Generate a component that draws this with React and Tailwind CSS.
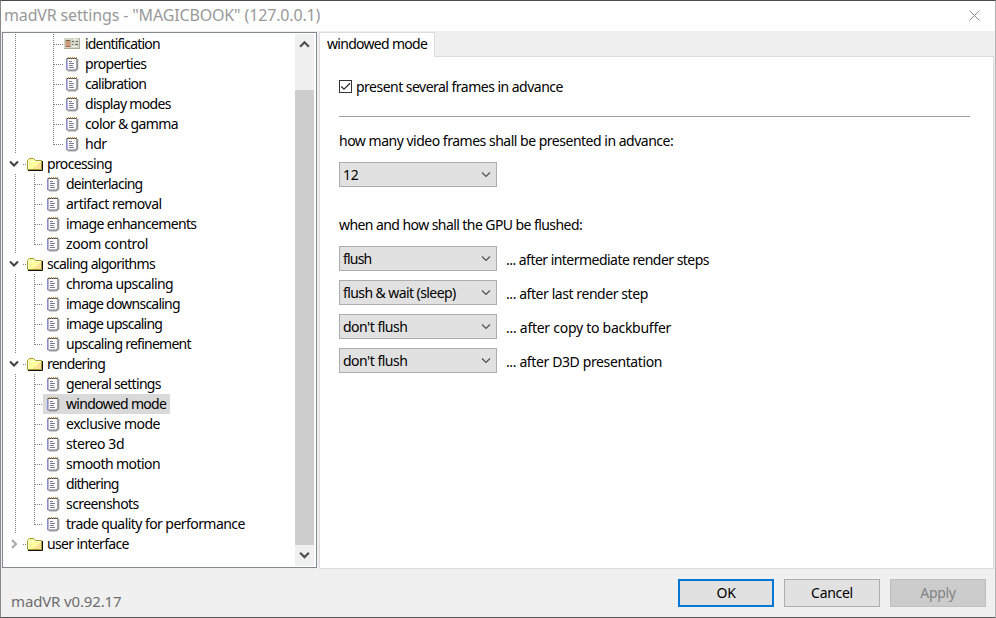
import React from "react";

const V_DOTS =
  "w-px shrink-0 bg-[repeating-linear-gradient(to_bottom,#808080_0px,#808080_1px,transparent_1px,transparent_2px)]";
const H_DOTS =
  "h-px shrink-0 bg-[repeating-linear-gradient(to_right,#808080_0px,#808080_1px,transparent_1px,transparent_2px)]";

// Letter spacing of each label, so that it keeps the narrow native UI width.
const TRACKING = {
  identification: "tracking-[-0.82px]",
  properties: "tracking-[-0.7px]",
  calibration: "tracking-[-0.77px]",
  "display modes": "tracking-[-0.68px]",
  "color & gamma": "tracking-[-0.62px]",
  hdr: "tracking-[-0.5px]",
  processing: "tracking-[-0.65px]",
  deinterlacing: "tracking-[-0.78px]",
  "artifact removal": "tracking-[-0.5px]",
  "image enhancements": "tracking-[-0.67px]",
  "zoom control": "tracking-[-0.4px]",
  "scaling algorithms": "tracking-[-0.72px]",
  "chroma upscaling": "tracking-[-0.62px]",
  "image downscaling": "tracking-[-0.77px]",
  "image upscaling": "tracking-[-0.77px]",
  "upscaling refinement": "tracking-[-0.75px]",
  rendering: "tracking-[-0.8px]",
  "general settings": "tracking-[-0.7px]",
  "windowed mode": "tracking-[-0.7px]",
  "exclusive mode": "tracking-[-0.48px]",
  "stereo 3d": "tracking-[-0.4px]",
  "smooth motion": "tracking-[-0.57px]",
  dithering: "tracking-[-0.9px]",
  screenshots: "tracking-[-0.57px]",
  "trade quality for performance": "tracking-[-0.56px]",
  "user interface": "tracking-[-0.65px]",
  flush: "tracking-[-0.8px]",
  "flush & wait (sleep)": "tracking-[-0.58px]",
  "don't flush": "tracking-[-0.5px]",
  "present several frames in advance": "tracking-[-0.52px]",
  "how many video frames shall be presented in advance:": "tracking-[-0.49px]",
  "when and how shall the GPU be flushed:": "tracking-[-0.57px]",
  "... after intermediate render steps": "tracking-[-0.53px]",
  "... after last render step": "tracking-[-0.43px]",
  "... after copy to backbuffer": "tracking-[-0.27px]",
  "... after D3D presentation": "tracking-[-0.38px]",
};

function Label({ children }) {
  return <span className={TRACKING[children] || ""}>{children}</span>;
}

function NoteIcon() {
  return (
    <svg width="14" height="16" viewBox="0 0 14 16" className="shrink-0">
      <path d="M2 14.8H9.5L11.7 13V3" fill="none" stroke="#a3a3a3" strokeWidth="1.3" />
      <path d="M.8 2.5H10.8V12.2L9 14H.8Z" fill="#fafaff" stroke="#6e6e78" strokeWidth=".9" />
      <path d="M.7 3v11" stroke="#8a8ad2" strokeWidth="1.3" />
      <path d="M2 1.5h1M4 1.5h1M6 1.5h1M8 1.5h1M10 1.5h1" stroke="#b9924c" />
      <path d="M1 2.5h1M3 2.5h1M5 2.5h1M7 2.5h1M9 2.5h1" stroke="#5a4422" />
      <path d="M3 5.5h3M3 7.5h5M3 9.5h4M3 11.5h5" stroke="#7b808c" />
    </svg>
  );
}

function CardIcon() {
  return (
    <svg width="16" height="16" viewBox="0 0 16 16" className="shrink-0">
      <rect x="0" y="2" width="16" height="11" fill="#d3d6c8" />
      <path d="M0 12.5h16M15.5 2v11" stroke="#a9ada0" />
      <rect x="1" y="4" width="6" height="7" fill="#b9b39a" />
      <rect x="2" y="5" width="4" height="5" rx="1" fill="#d09a80" />
      <path d="M2 10.5h4" stroke="#b0604c" />
      <path d="M2 4.5h4" stroke="#7a5a48" />
      <path d="M8 5.5h2M12 5.5h2M8 8.5h1M11 8.5h3" stroke="#5c6a60" />
      <path d="M8 10.5h5M9 3.5h4" stroke="#eef0e6" />
    </svg>
  );
}

function FolderIcon() {
  return (
    <svg width="16" height="16" viewBox="0 0 16 16" className="shrink-0">
      <path d="M1 14.5h14.5V5" fill="none" stroke="#111" />
      <path d="M.5 13.5V4.5L2.5 2.5H6.5L8.5 4.5H14.5V13.5Z" fill="#ffff9c" stroke="#a39d2c" />
      <path d="M14 6v7H5Z" fill="#fbd79a" opacity=".75" />
      <path d="M1.5 13V5.5H14" fill="none" stroke="#ffffe0" />
    </svg>
  );
}

function Chevron({ dir, color = "#505050", w = 9, stroke = 2 }) {
  const d = {
    down: "M1 2.5L5 6.5L9 2.5",
    up: "M1 7L5 3L9 7",
    right: "M3 1L7 5L3 9",
  }[dir];
  return (
    <svg width={w} height={w} viewBox="0 0 10 10" className="shrink-0">
      <path d={d} fill="none" stroke={color} strokeWidth={stroke} />
    </svg>
  );
}

function Category({ label, open = true }) {
  return (
    <div className="flex h-5 items-center">
      <div className="ml-[6px] flex w-[14px] items-center">
        <Chevron dir={open ? "down" : "right"} color={open ? "#404040" : "#a6a6a6"} stroke={2} w={10} />
      </div>
      <div className={`${H_DOTS} w-1`} />
      <FolderIcon />
      <span className="ml-1"><Label>{label}</Label></span>
    </div>
  );
}

function Item({ label, deep, last, selected, card }) {
  return (
    <div className="flex h-5 items-center">
      <div className={`${V_DOTS} ml-3 h-5`} />
      <div className={`${V_DOTS} ${deep ? "ml-[37px]" : "ml-[18px]"} ${last ? "h-[11px] self-start" : "h-5"}`} />
      <div className={`${H_DOTS} ${deep ? "w-[10px]" : "w-2"}`} />
      <div className={`flex h-5 items-center ${selected ? "bg-[#d9d9d9] pr-1" : ""}`}>
        <div className={`flex items-center ${deep ? "w-[21px]" : "w-[23px] pl-[3px]"}`}>
          {card ? <CardIcon /> : <div className={deep ? "pl-[2px]" : "pl-px"}><NoteIcon /></div>}
        </div>
        <Label>{label}</Label>
      </div>
    </div>
  );
}

const GROUPS = [
  ["processing", ["deinterlacing", "artifact removal", "image enhancements", "zoom control"]],
  ["scaling algorithms", ["chroma upscaling", "image downscaling", "image upscaling", "upscaling refinement"]],
  [
    "rendering",
    [
      "general settings",
      "windowed mode",
      "exclusive mode",
      "stereo 3d",
      "smooth motion",
      "dithering",
      "screenshots",
      "trade quality for performance",
    ],
  ],
];
const DEVICE = ["identification", "properties", "calibration", "display modes", "color & gamma", "hdr"];

function Tree() {
  return (
    <div className="flex h-[536px] w-[315px] border border-[#828790] bg-white">
      <div className="w-[292px] overflow-hidden pt-px whitespace-nowrap">
        {DEVICE.map((l, i) => (
          <Item key={l} label={l} deep card={i === 0} last={i === DEVICE.length - 1} />
        ))}
        {GROUPS.map(([name, items]) => (
          <div key={name}>
            <Category label={name} />
            {items.map((l, i) => (
              <Item key={l} label={l} last={i === items.length - 1} selected={l === "windowed mode"} />
            ))}
          </div>
        ))}
        <Category label="user interface" open={false} />
      </div>
      <div className="my-px flex w-[19px] flex-col items-center bg-[#f0f0f0]">
        <div className="flex h-[21px] items-center"><Chevron dir="up" w={11} /></div>
        <div className="mt-[35px] h-[455px] w-full bg-[#cdcdcd]" />
        <div className="flex flex-1 items-center"><Chevron dir="down" w={11} /></div>
      </div>
    </div>
  );
}

function Select({ value }) {
  return (
    <div className="flex h-[25px] w-[158px] items-center justify-between border border-[#adadad] bg-[#e1e1e1] pr-[5px] pl-[3px]">
      <Label>{value}</Label>
      <Chevron dir="down" w={10} stroke={1.2} color="#505050" />
    </div>
  );
}

const FLUSH = [
  ["flush", "... after intermediate render steps"],
  ["flush & wait (sleep)", "... after last render step"],
  ["don't flush", "... after copy to backbuffer"],
  ["don't flush", "... after D3D presentation"],
];

function Panel() {
  return (
    <div className="flex h-[537px] w-[675px] flex-col">
      <div className="flex h-[25px]">
        <div className="h-[25px] w-[116px] border-x border-t border-[#dcdcdc] bg-white pl-[7px] leading-[22px]">
          <Label>windowed mode</Label>
        </div>
        <div className="flex-1 border-b border-[#dcdcdc]" />
      </div>
      <div className="flex flex-1 flex-col border-x border-b border-[#dcdcdc] bg-white pl-[19px]">
        <label className="mt-5 flex h-5 items-center gap-1">
          <svg width="13" height="13" viewBox="0 0 13 13" className="-mt-px">
            <rect x=".5" y=".5" width="12" height="12" fill="#fff" stroke="#333" />
            <path d="M2.2 6.5L5 9.2L11 3.2" fill="none" stroke="#333" strokeWidth="1.3" />
          </svg>
          <Label>present several frames in advance</Label>
        </label>
        <div className="mt-[19px] h-px w-[631px] bg-[#a0a0a0]" />
        <div className="mt-[14px] h-5 leading-5">
          <Label>how many video frames shall be presented in advance:</Label>
        </div>
        <div className="mt-[11px]"><Select value="12" /></div>
        <div className="mt-7 h-5 leading-5">
          <Label>when and how shall the GPU be flushed:</Label>
        </div>
        <div className="mt-[11px] flex flex-col gap-[9px]">
          {FLUSH.map(([v, t]) => (
            <div key={t} className="flex items-center gap-[9px]">
              <Select value={v} />
              <span className="pt-[2px]"><Label>{t}</Label></span>
            </div>
          ))}
        </div>
      </div>
    </div>
  );
}

export default function App() {
  return (
    <div className="flex h-[618px] w-[996px] flex-col overflow-hidden border border-t-[#4b4b4b] border-r-[#b4b4b4] border-b-[#555] border-l-[#8a8a8a] bg-[#f0f0f0] font-['Noto_Sans','Open_Sans',sans-serif] text-[14px] leading-5 tracking-[-0.3px] text-black">
      <div className="flex h-[30px] shrink-0 items-center justify-between bg-white pr-[15px] pl-[3px]">
        <span className="-mt-[2px] text-[16px] tracking-[-0.15px] text-[#999]">madVR settings - "MAGICBOOK" (127.0.0.1)</span>
        <svg width="11" height="11" viewBox="0 0 11 11" className="-mt-[2px]">
          <path d="M.5 .5l10 10M10.5 .5l-10 10" stroke="#8c8c8c" />
        </svg>
      </div>
      <div className="flex gap-[2px] pt-px pl-px">
        <Tree />
        <Panel />
      </div>
      <div className="flex flex-1 items-start pr-[9px] pl-[10px]">
        <span className="mt-[22px] flex-1 text-[15px] tracking-[-0.15px] text-[#6d6d6d]">madVR v0.92.17</span>
        <div className="mt-[10px] flex gap-[10px]">
          <button className="h-7 w-24 border-2 border-[#0078d7] bg-[#e1e1e1]">OK</button>
          <button className="h-7 w-24 border border-[#adadad] bg-[#e1e1e1]">Cancel</button>
          <button className="h-7 w-24 border border-[#bfbfbf] bg-[#ccc] text-[#838383]">Apply</button>
        </div>
      </div>
    </div>
  );
}
